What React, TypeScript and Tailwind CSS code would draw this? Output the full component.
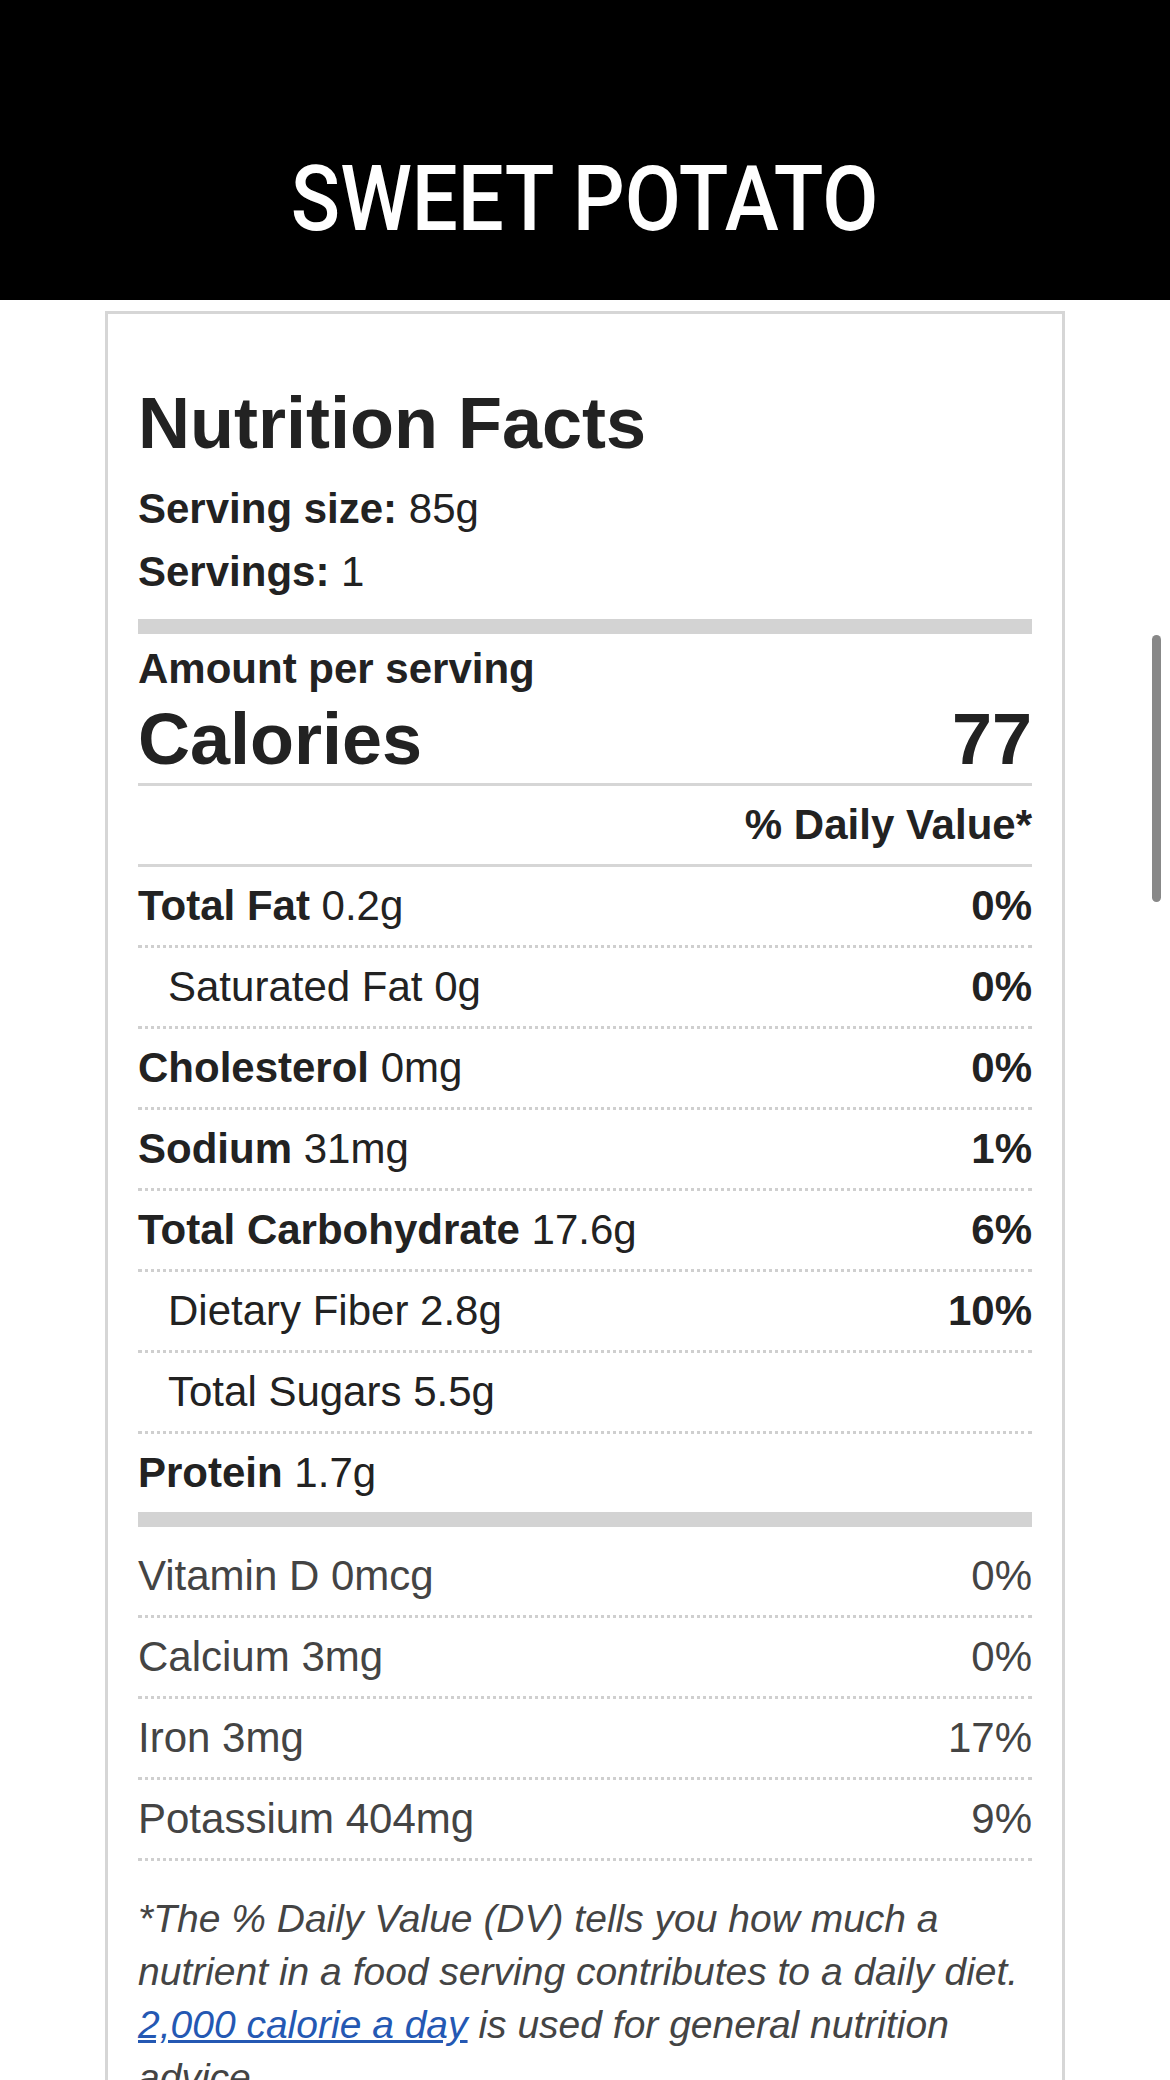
type Nutrient = {
  label: string;
  amount: string;
  dv?: string;
  sub?: boolean;
};

const nutrients: Nutrient[] = [
  { label: "Total Fat", amount: "0.2g", dv: "0%" },
  { label: "Saturated Fat", amount: "0g", dv: "0%", sub: true },
  { label: "Cholesterol", amount: "0mg", dv: "0%" },
  { label: "Sodium", amount: "31mg", dv: "1%" },
  { label: "Total Carbohydrate", amount: "17.6g", dv: "6%" },
  { label: "Dietary Fiber", amount: "2.8g", dv: "10%", sub: true },
  { label: "Total Sugars", amount: "5.5g", sub: true },
  { label: "Protein", amount: "1.7g" },
];

const vitamins = [
  { label: "Vitamin D", amount: "0mcg", dv: "0%" },
  { label: "Calcium", amount: "3mg", dv: "0%" },
  { label: "Iron", amount: "3mg", dv: "17%" },
  { label: "Potassium", amount: "404mg", dv: "9%" },
];

const App: React.FC = () => {
  return (
    <div className="relative min-h-screen bg-white font-['Liberation_Sans',Arial,sans-serif] text-[#222]">
      <header className="h-[300px] bg-black pt-[155px] text-center">
        <h2 className="inline-block scale-x-[0.905] font-['Roboto',sans-serif] text-[90px] font-medium leading-[90px] text-white">
          SWEET POTATO
        </h2>
      </header>

      <section className="mx-auto mt-[11px] w-[960px] border-[3px] border-[#d6d6d6] px-[30px] pt-[73px]">
        <h1 className="text-[72px] font-bold leading-[72px]">Nutrition Facts</h1>

        <div className="mt-[18px] text-[42px] leading-[63px]">
          <p><strong>Serving size:</strong> 85g</p>
          <p><strong>Servings:</strong> 1</p>
        </div>

        <div className="mt-[16px] h-[15px] bg-[#d3d3d3]" />

        <p className="mt-[3px] text-[42px] font-bold leading-[63px]">Amount per serving</p>
        <div className="flex items-baseline justify-between border-b-[3px] border-[#d6d6d6] pt-[3px] pb-[8px] text-[72px] font-bold leading-[72px]">
          <span>Calories</span>
          <span>77</span>
        </div>

        <div className="border-b-[3px] border-[#d6d6d6] pt-[7px] pb-[8px] text-right text-[42px] font-bold leading-[63px]">
          % Daily Value*
        </div>

        {nutrients.map((_n, i) => (
          <div
            key={_n.label}
            className={
              i === nutrients.length - 1
                ? "flex items-baseline justify-between pt-[7px] pb-[8px] text-[42px] leading-[63px]"
                : "flex items-baseline justify-between border-b-[3px] border-dotted border-[#cfcfcf] pt-[7px] pb-[8px] text-[42px] leading-[63px]"
            }
          >
            <span className={_n.sub ? "pl-[30px]" : ""}>
              {_n.sub ? _n.label : <strong>{_n.label}</strong>} {_n.amount}
            </span>
            {_n.dv && <strong>{_n.dv}</strong>}
          </div>
        ))}

        <div className="mb-[10px] h-[15px] bg-[#d3d3d3]" />

        {vitamins.map(_v => (
          <div
            key={_v.label}
            className="flex items-baseline justify-between border-b-[3px] border-dotted border-[#cfcfcf] pt-[7px] pb-[8px] text-[42px] leading-[63px] text-[#444]"
          >
            <span>{_v.label} {_v.amount}</span>
            <span>{_v.dv}</span>
          </div>
        ))}

        <p className="pt-[31px] pb-[40px] text-[39px] italic leading-[53px] text-[#444]">
          *The % Daily Value (DV) tells you how much a nutrient in a food serving contributes to a daily diet.{" "}
          <a href="#" className="text-[#2458b3] underline">2,000 calorie a day</a> is used for general nutrition advice.
        </p>
      </section>

      <div className="absolute top-[635px] left-[1152px] h-[267px] w-[9px] rounded-full bg-[#888]" />
    </div>
  );
};

export default App;
